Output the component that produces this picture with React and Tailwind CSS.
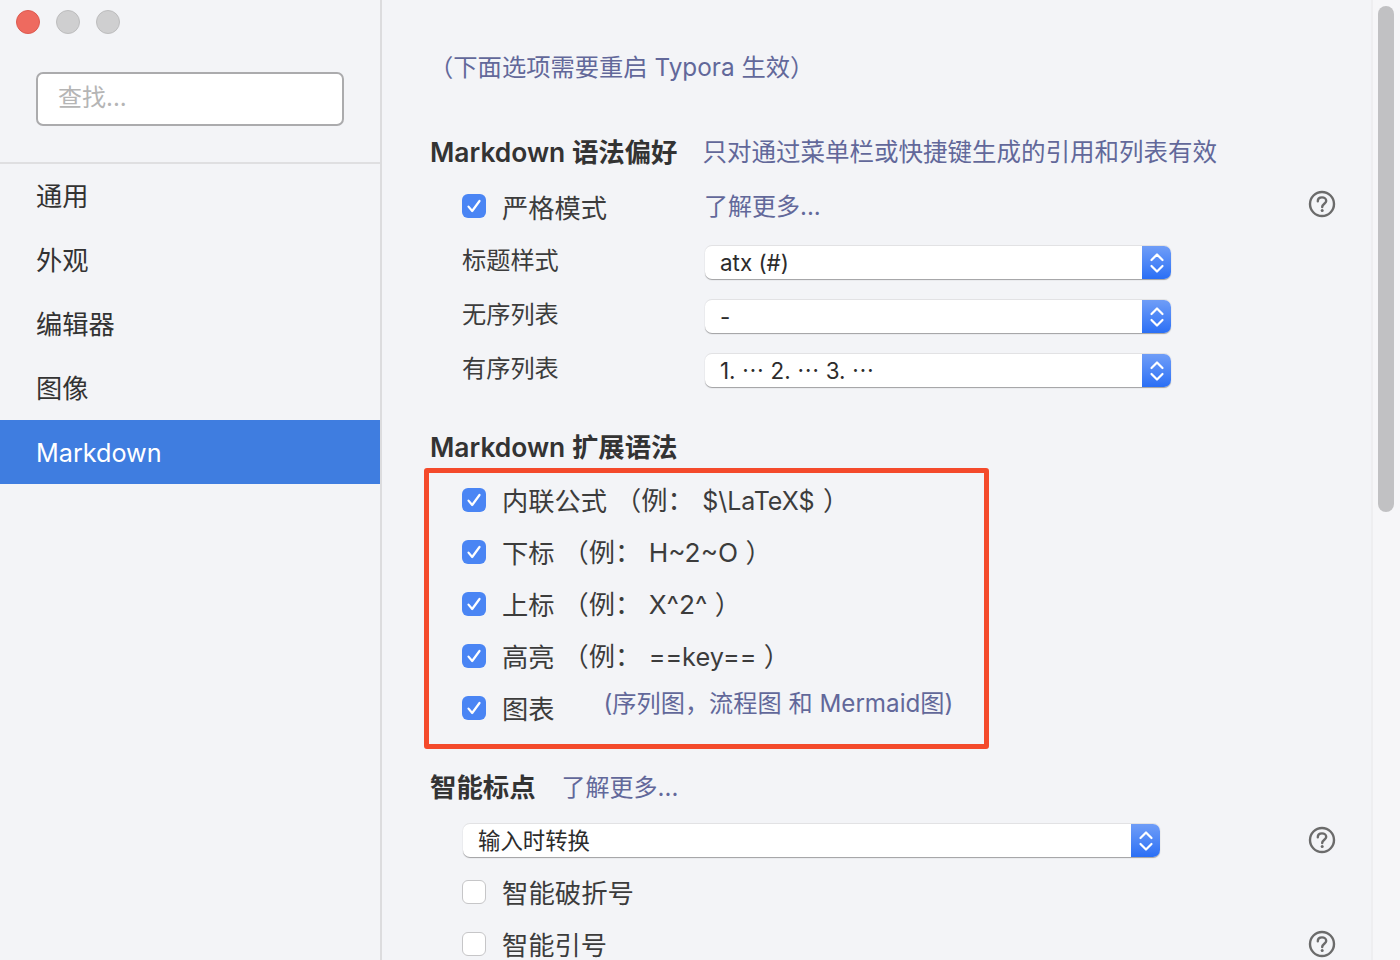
import React from "react";

const font = "font-['Inter','Noto_Sans_CJK_SC',sans-serif]";

const navItems = ["通用", "外观", "编辑器", "图像", "Markdown"];

const Checkbox = ({ checked = true }) => {
  if (!checked) {
    return <span className="w-6 h-6 shrink-0 rounded-[6px] bg-white border-[1.5px] border-[#c6c6c8]"></span>;
  }
  return (
    <span className="w-6 h-6 shrink-0 rounded-[6px] bg-[#4a85f4] flex items-center justify-center">
      <svg width="16" height="16" viewBox="0 0 16 16" fill="none">
        <path d="M2.5 8.6 L6.2 13 L13.5 3" stroke="white" strokeWidth="2.2" strokeLinecap="round" strokeLinejoin="round" />
      </svg>
    </span>
  );
};

const SelectBox = ({ value, className }) => (
  <div className={`h-[34px] flex rounded-[7px] bg-white border-t border-t-[#e2e2e4] shadow-[0_1px_1px_rgba(0,0,0,0.35)] ${className}`}>
    <div className="flex-1 pl-[15px] flex items-center text-[22.4px] text-[#2c2c2c] whitespace-pre">{value}</div>
    <div className="w-[29px] rounded-r-[7px] bg-gradient-to-b from-[#6f9df7] to-[#2a6ff5] flex items-center justify-center">
      <svg width="16" height="26" viewBox="0 0 16 26" fill="none">
        <path d="M2.5 10 L8 4.5 L13.5 10" stroke="white" strokeWidth="2.2" strokeLinecap="round" strokeLinejoin="round" />
        <path d="M2.5 16 L8 21.5 L13.5 16" stroke="white" strokeWidth="2.2" strokeLinecap="round" strokeLinejoin="round" />
      </svg>
    </div>
  </div>
);

const HelpIcon = () => (
  <svg className="block" width="28" height="28" viewBox="0 0 28 28" fill="none">
    <circle cx="14" cy="14" r="12" stroke="#6b6b6b" strokeWidth="2.4" />
    <path d="M9.8 11.2 C9.8 8.7 11.7 7.4 14 7.4 C16.3 7.4 18.2 8.8 18.2 11 C18.2 13.6 14.2 14 14.2 17" stroke="#6b6b6b" strokeWidth="2.4" strokeLinecap="round" />
    <circle cx="14.2" cy="20.6" r="1.5" fill="#6b6b6b" />
  </svg>
);

const SyntaxRow = ({ label, example }) => (
  <div className="h-[52px] flex items-center pl-[33px] text-[26.25px] text-[#3c3c3c]">
    <Checkbox />
    <span className="ml-4 pt-[3px] whitespace-pre">{label}</span>
    <span className="pt-[2px] whitespace-pre ml-2">{example}</span>
  </div>
);

export default function App() {
  return (
    <div className={`${font} w-[1400px] h-[960px] overflow-hidden flex bg-[#f3f4f7]`}>
      <aside className="w-[382px] shrink-0 border-r-2 border-[#dcdcde]">
        <div className="flex gap-[16px] pl-4 pt-[10px]">
          <span className="w-6 h-6 rounded-full bg-[#ee6a5f] border border-[#dd5a50]"></span>
          <span className="w-6 h-6 rounded-full bg-[#cfcfd0] border border-[#bdbdbe]"></span>
          <span className="w-6 h-6 rounded-full bg-[#cfcfd0] border border-[#bdbdbe]"></span>
        </div>
        <div className="mt-[38px] ml-9 w-[308px] h-[54px] rounded-[7px] border-2 border-[#ababad] bg-white pl-5 pb-[2px] flex items-center text-[24px] text-[#b5b5b5]">查找...</div>
        <div className="mt-[36px] border-t-2 border-[#dfdfe1]">
          {navItems.map((item, i) => (
            <div
              key={item}
              className={`h-16 pl-9 flex items-center ${i === 4 ? "pt-1 bg-[#3f7de0] text-white text-[25.2px]" : "pt-[2px] text-[26.25px] text-[#333333]"}`}
            >
              {item}
            </div>
          ))}
        </div>
      </aside>

      <main className="w-[989px] shrink-0 pl-[49px]">
        <div className="mt-[50px] -ml-[2px] h-[34px] flex items-center text-[24.3px] text-[#62689a] whitespace-pre">（下面选项需要重启 Typora 生效）</div>

        <div className="mt-[50px] h-[34px] flex items-center">
          <span className="-ml-px pt-[2px] text-[26.4px] font-semibold text-[#333333] leading-none">Markdown 语法偏好</span>
          <span className="ml-[25px] pt-[2px] text-[24.5px] text-[#62689a]">只对通过菜单栏或快捷键生成的引用和列表有效</span>
        </div>

        <div className="mt-[21px] h-[34px] flex items-center pl-[31px] pr-[35px] text-[26.25px] text-[#3c3c3c]">
          <Checkbox />
          <span className="ml-4 pt-[6px]">严格模式</span>
          <span className="ml-[97px] pt-[2px] text-[#62689a] text-[24px]">了解更多...</span>
          <span className="ml-auto mb-[4px]"><HelpIcon /></span>
        </div>

        <div className="mt-[22px] flex flex-col gap-5 pl-[31px]">
          {[
            ["标题样式", "atx (#)"],
            ["无序列表", "-"],
            ["有序列表", "1. ⋯ 2. ⋯ 3. ⋯"],
          ].map(([label, value]) => (
            <div key={label} className="h-[34px] flex items-center">
              <span className="w-[243px] pb-[2px] text-[24.2px] text-[#3c3c3c]">{label}</span>
              <SelectBox value={value} className="w-[466px]" />
            </div>
          ))}
        </div>

        <div className="mt-[43px] -ml-px h-[34px] pt-[2px] flex items-center text-[26.4px] font-semibold text-[#333333]">Markdown 扩展语法</div>

        <div className="mt-[4px] -ml-[7px] w-[565px] h-[281px] border-[5px] border-[#f44a2b] rounded-[3px] pt-px">
          <SyntaxRow label="内联公式" example={<>（例： <span className="ml-px text-[25px]">$\LaTeX$</span> <span className="ml-px">）</span></>} />
          <SyntaxRow label="下标" example="（例： H~2~O ）" />
          <SyntaxRow label="上标" example="（例： X^2^ ）" />
          <SyntaxRow label="高亮" example={<>（例： <span className="text-[25.3px]">==key==</span> ）</>} />
          <div className="h-[52px] flex items-center pl-[33px] text-[26.25px] text-[#3c3c3c]">
            <Checkbox />
            <span className="ml-4 pt-[3px]">图表</span>
            <span className="ml-[49px] -mt-[8px] text-[24.2px] text-[#62689a] whitespace-pre">(序列图，流程图 和 Mermaid图)</span>
          </div>
        </div>

        <div className="mt-[21px] -ml-px h-[34px] flex items-center">
          <span className="pt-[2px] text-[26.4px] font-semibold text-[#333333]">智能标点</span>
          <span className="ml-[26px] pt-[2px] text-[24px] text-[#62689a]">了解更多...</span>
        </div>

        <div className="mt-[19px] flex items-center pl-[32px] pr-[35px]">
          <SelectBox value="输入时转换" className="w-[697px]" />
          <span className="ml-auto"><HelpIcon /></span>
        </div>

        <div className="mt-[18px] h-[34px] flex items-center pl-[31px] text-[26.4px] text-[#3c3c3c]">
          <Checkbox checked={false} />
          <span className="ml-4 pt-[3px]">智能破折号</span>
        </div>
        <div className="mt-[18px] h-[34px] flex items-center pl-[31px] pr-[35px] text-[26.25px] text-[#3c3c3c]">
          <Checkbox checked={false} />
          <span className="ml-4 pt-[3px]">智能引号</span>
          <span className="ml-auto"><HelpIcon /></span>
        </div>
      </main>

      <div className="flex-1 border-l-2 border-[#eeeef0] bg-[#f6f6f8] pl-[5px] pt-[6px]">
        <div className="w-4 h-[506px] rounded-full bg-[#c1c1c3]"></div>
      </div>
    </div>
  );
}
